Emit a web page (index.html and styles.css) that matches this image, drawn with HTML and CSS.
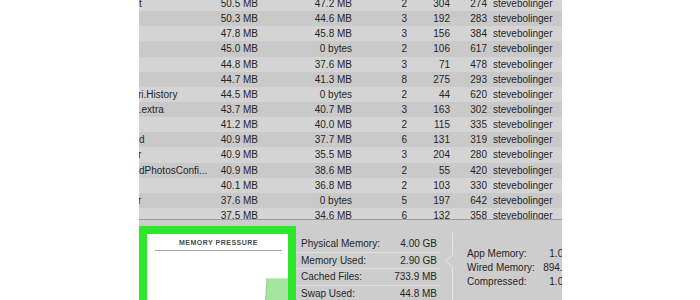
FILE: index.html
```html
<!DOCTYPE html>
<html>
<head>
<meta charset="utf-8">
<link rel="stylesheet" href="styles.css">
</head>
<body>
<div class="page">
  <div class="gutter"></div>
  <div class="app">
    <div class="table">
      <div class="rows">
        <div class="row"><span class="name">t</span><span>50.5 MB</span><span>47.2 MB</span><span>2</span><span>304</span><span>274</span><span class="user">stevebolinger</span></div>
        <div class="row"><span class="name"></span><span>50.3 MB</span><span>44.6 MB</span><span>3</span><span>192</span><span>283</span><span class="user">stevebolinger</span></div>
        <div class="row"><span class="name"></span><span>47.8 MB</span><span>45.8 MB</span><span>3</span><span>156</span><span>384</span><span class="user">stevebolinger</span></div>
        <div class="row"><span class="name"></span><span>45.0 MB</span><span>0 bytes</span><span>2</span><span>106</span><span>617</span><span class="user">stevebolinger</span></div>
        <div class="row"><span class="name"></span><span>44.8 MB</span><span>37.6 MB</span><span>3</span><span>71</span><span>478</span><span class="user">stevebolinger</span></div>
        <div class="row"><span class="name"></span><span>44.7 MB</span><span>41.3 MB</span><span>8</span><span>275</span><span>293</span><span class="user">stevebolinger</span></div>
        <div class="row"><span class="name"><span class="cut-s">ri.History</span></span><span>44.5 MB</span><span>0 bytes</span><span>2</span><span>44</span><span>620</span><span class="user">stevebolinger</span></div>
        <div class="row"><span class="name"><span class="cut">t.extra</span></span><span>43.7 MB</span><span>40.7 MB</span><span>3</span><span>163</span><span>302</span><span class="user">stevebolinger</span></div>
        <div class="row"><span class="name"></span><span>41.2 MB</span><span>40.0 MB</span><span>2</span><span>115</span><span>335</span><span class="user">stevebolinger</span></div>
        <div class="row"><span class="name">d</span><span>40.9 MB</span><span>37.7 MB</span><span>6</span><span>131</span><span>319</span><span class="user">stevebolinger</span></div>
        <div class="row"><span class="name"><span class="cut-s">r</span></span><span>40.9 MB</span><span>35.5 MB</span><span>3</span><span>204</span><span>280</span><span class="user">stevebolinger</span></div>
        <div class="row"><span class="name">dPhotosConfi...</span><span>40.9 MB</span><span>38.6 MB</span><span>2</span><span>55</span><span>420</span><span class="user">stevebolinger</span></div>
        <div class="row"><span class="name"></span><span>40.1 MB</span><span>36.8 MB</span><span>2</span><span>103</span><span>330</span><span class="user">stevebolinger</span></div>
        <div class="row"><span class="name"><span class="cut-s">r</span></span><span>37.6 MB</span><span>0 bytes</span><span>5</span><span>197</span><span>642</span><span class="user">stevebolinger</span></div>
        <div class="row"><span class="name"></span><span>37.5 MB</span><span>34.6 MB</span><span>6</span><span>132</span><span>358</span><span class="user">stevebolinger</span></div>
      </div>
    </div>
    <div class="panel">
      <div class="pressure">
        <div class="pressure-title">MEMORY PRESSURE</div>
        <svg class="pressure-chart" width="141" height="60" viewBox="0 0 141 60">
          <polygon points="120,27 141,27 141,60 118,60" fill="#a4e49d"/>
          <line x1="120" y1="27.5" x2="141" y2="27.5" stroke="#c2efbc" stroke-width="1"/>
          <line x1="120" y1="27" x2="118" y2="60" stroke="#8fd488" stroke-width="1"/>
        </svg>
      </div>
      <div class="stats">
        <div class="stat"><span>Physical Memory:</span><span>4.00 GB</span></div>
        <div class="stat"><span>Memory Used:</span><span>2.90 GB</span></div>
        <div class="stat"><span>Cached Files:</span><span>733.9 MB</span></div>
        <div class="stat"><span>Swap Used:</span><span>44.8 MB</span></div>
      </div>
      <svg class="divider" width="10" height="80" viewBox="0 0 10 80">
        <polyline points="7.5,13 7.5,35 1,41 7.5,47 7.5,80" fill="none" stroke="#e4e4e4" stroke-width="1"/>
      </svg>
      <div class="breakdown">
        <span>App Memory:</span><span class="val">1.02 GB</span>
        <span>Wired Memory:</span><span class="val">894.6 MB</span>
        <span>Compressed:</span><span class="val">1.00 GB</span>
      </div>
    </div>
  </div>
</div>
</body>
</html>
```

FILE: styles.css
```css
html, body {
  margin: 0;
  padding: 0;
  background: #ffffff;
}

.page {
  display: flex;
  width: 700px;
  height: 300px;
  overflow: hidden;
  font-family: "Liberation Sans", Arial, sans-serif;
  font-size: 10px;
  color: #262626;
}

.gutter {
  width: 139px;
  flex: none;
}

.app {
  width: 423px;
  flex: none;
  height: 300px;
  overflow: hidden;
  display: flex;
  flex-direction: column;
  background: #cdcdcd;
}

.table {
  height: 219px;
  flex: none;
  overflow: hidden;
  border-bottom: 1px solid #9c9c9c;
}

.rows {
  margin-top: -4px;
}

.row {
  display: grid;
  grid-template-columns: 70px 49px 94px 55px 43px 37px 1fr;
  height: 15.15px;
  line-height: 15.15px;
  white-space: nowrap;
  background: #d4d4d4;
}

.row:nth-child(even) {
  background: #c9c9c9;
}

.row > span {
  text-align: right;
  overflow: hidden;
}

.row > span.name {
  text-align: left;
}

.row > span.user {
  text-align: left;
  padding-left: 6px;
}

.cut {
  display: inline-block;
  margin-left: -3px;
}

.cut-s {
  display: inline-block;
  margin-left: -1px;
}

.panel {
  flex: 1;
  display: flex;
  align-items: flex-start;
  overflow: hidden;
  background: #cdcdcd;
}

.pressure {
  width: 141px;
  height: 90px;
  flex: none;
  margin-top: 6px;
  border: 8px solid #2ee82e;
  background: #ffffff;
  display: flex;
  flex-direction: column;
}

.pressure-title {
  margin: 0 6px 0 8px;
  padding: 3px 0 2px;
  line-height: 11px;
  text-align: center;
  font-size: 7px;
  font-weight: bold;
  letter-spacing: 0.5px;
  color: #4a4a4a;
  border-bottom: 1px solid #a5a5a5;
}

.pressure-chart {
  display: block;
}

.stats {
  width: 144px;
  flex: none;
  margin-top: 16px;
}

.stat {
  display: flex;
  justify-content: space-between;
  height: 15.5px;
  line-height: 15.5px;
  padding: 0 3px 0 5px;
  border-bottom: 1px solid #e0e0e0;
}

.divider {
  display: block;
  flex: none;
  margin-left: 5px;
}

.breakdown {
  flex: none;
  width: 119px;
  margin-top: 27px;
  padding-left: 12px;
  display: grid;
  grid-template-columns: 70px 49px;
  line-height: 14.2px;
  white-space: nowrap;
}

.breakdown .val {
  text-align: right;
}
```
